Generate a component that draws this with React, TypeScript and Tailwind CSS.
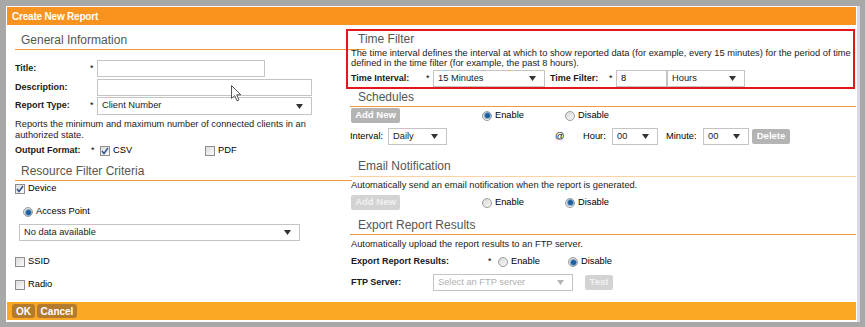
import React from 'react';

const font = { fontFamily: '"Liberation Sans", Arial, sans-serif' };

function Arrow({ muted = false }: { muted?: boolean }) {
  return (
    <svg width="7" height="5" viewBox="0 0 7 5" className="shrink-0">
      <path d="M0 0 L7 0 L3.5 5 Z" fill={muted ? '#b5b5b5' : '#333'} />
    </svg>
  );
}

function Select({ value, w, muted = false }: { value: string; w: string; muted?: boolean }) {
  return (
    <div
      className={`${w} h-full flex items-center justify-between border border-[#c4c4c4] bg-white pl-[4px] pr-[8px] text-[9.3px] ${
        muted ? 'text-[#b0b0b0]' : 'text-[#222]'
      }`}
    >
      <span>{value}</span>
      <Arrow muted={muted} />
    </div>
  );
}

function Checkbox({ checked = false }: { checked?: boolean }) {
  return (
    <div className="w-[10px] h-[10px] shrink-0 border border-[#8e8e8e] bg-gradient-to-br from-[#dcdcdc] to-[#fafafa] flex items-center justify-center">
      {checked && (
        <svg width="8" height="8" viewBox="0 0 8 8">
          <path d="M1 4 L3 6.5 L7 1" fill="none" stroke="#2c4f8a" strokeWidth="1.4" />
        </svg>
      )}
    </div>
  );
}

function Radio({ checked = false }: { checked?: boolean }) {
  return (
    <div className="w-[10px] h-[10px] shrink-0 rounded-full border border-[#9c9c9c] bg-gradient-to-br from-[#d8d8d8] to-[#f8f8f8] flex items-center justify-center">
      {checked && <div className="w-[5px] h-[5px] rounded-full bg-[#1f5f9e] ring-1 ring-[#7fa6cc]" />}
    </div>
  );
}

function Btn({ label, w, disabled = false }: { label: string; w: string; disabled?: boolean }) {
  return (
    <div
      className={`${w} h-full rounded-[2px] flex items-center justify-center font-bold text-[9.5px] ${
        disabled ? 'bg-[#d3d3d3] text-[#f1f1f1]' : 'bg-[#b4b4b4] text-white'
      }`}
    >
      {label}
    </div>
  );
}

function Label({ text, w }: { text: string; w: string }) {
  return <div className={`${w} shrink-0 font-bold text-[9px] text-[#1a1a1a]`}>{text}</div>;
}

function Cursor() {
  return (
    <svg width="12" height="17" viewBox="0 0 12 17" className="absolute left-[231px] top-[85px]">
      <path
        d="M0.5 0.5 L0.5 13.5 L3.6 10.6 L6 15.8 L8 14.9 L5.7 9.8 L9.8 9.8 Z"
        fill="#fff"
        stroke="#555"
        strokeWidth="1"
        strokeLinejoin="round"
      />
    </svg>
  );
}

export default function App() {
  return (
    <div className="relative w-[865px] h-[327px] bg-[#a8a8a8] pt-[6px] pl-[6px]" style={font}>
      <div className="w-[854px] h-[316px] bg-white border-r-[3px] border-[#d8d8e6] pt-px pl-px pr-px pb-[2px] flex flex-col">
        {/* header */}
        <div className="h-[18px] shrink-0 bg-[#f7931e] flex items-center pl-[5px]">
          <span className="text-white font-bold text-[10px] tracking-[-0.2px]">Create New Report</span>
        </div>

        <div className="flex-1 flex">
          {/* left column */}
          <div className="w-[339px] shrink-0 flex flex-col pl-[8px]">
            <div className="h-[25px] flex items-end pb-[3px] border-b border-[#f39a3c] mr-[-19px] relative">
              <span className="pl-[6px] text-[12px] leading-[12px] text-[#555]">General Information</span>
            </div>

            <div className="mt-[10px] h-[17px] flex items-center">
              <Label text="Title:" w="w-[75px]" />
              <span className="w-[7px] text-[9px]">*</span>
              <div className="w-[168px] h-full border border-[#c4c4c4]" />
            </div>
            <div className="mt-[2px] h-[17px] flex items-center">
              <Label text="Description:" w="w-[82px]" />
              <div className="w-[215px] h-full border border-[#c4c4c4]" />
            </div>
            <div className="mt-[1px] h-[18px] flex items-center">
              <Label text="Report Type:" w="w-[75px]" />
              <span className="w-[7px] text-[9px]">*</span>
              <Select value="Client Number" w="w-[215px]" />
            </div>

            <p className="mt-[4px] text-[9.3px] leading-[11px] text-[#222] w-[310px]">
              Reports the minimum and maximum number of connected clients in an authorized state.
            </p>

            <div className="mt-[3px] h-[14px] flex items-center">
              <Label text="Output Format:" w="w-[76px]" />
              <span className="w-[9px] text-[9px]">*</span>
              <Checkbox checked />
              <span className="ml-[3px] w-[92px] text-[9.3px]">CSV</span>
              <Checkbox />
              <span className="ml-[3px] text-[9.3px]">PDF</span>
            </div>

            <div className="h-[23px] flex items-end pb-[3px] border-b border-[#f39a3c] mr-[-6px]">
              <span className="pl-[6px] text-[12px] leading-[12px] text-[#555]">Resource Filter Criteria</span>
            </div>

            <div className="mt-[2px] h-[12px] flex items-center">
              <Checkbox checked />
              <span className="ml-[3px] text-[9.3px]">Device</span>
            </div>
            <div className="mt-[11px] h-[12px] flex items-center pl-[8px]">
              <Radio checked />
              <span className="ml-[3px] text-[9.3px]">Access Point</span>
            </div>
            <div className="mt-[6px] h-[17px] pl-[4px]">
              <Select value="No data available" w="w-[281px]" />
            </div>
            <div className="mt-[15px] h-[12px] flex items-center">
              <Checkbox />
              <span className="ml-[3px] text-[9.3px]">SSID</span>
            </div>
            <div className="mt-[11px] h-[12px] flex items-center">
              <Checkbox />
              <span className="ml-[3px] text-[9.3px]">Radio</span>
            </div>
          </div>

          {/* right column */}
          <div className="flex-1 flex flex-col relative">
            <div className="mt-[4px] h-[60px] border-2 border-[#e4161b] mr-[1px] flex flex-col pl-[3px]">
              <div className="h-[14px] pl-[7px] text-[12px] leading-[14px] text-[#555] mt-px">Time Filter</div>
              <p className="mt-[2px] text-[9.3px] leading-[10px] text-[#222]">
                The time interval defines the interval at which to show reported data (for example, every 15 minutes) for the period of time
                <br />
                defined in the time filter (for example, the past 8 hours).
              </p>
              <div className="mt-[2px] h-[17px] flex items-center">
                <Label text="Time Interval:" w="w-[75px]" />
                <span className="w-[7px] text-[9px]">*</span>
                <Select value="15 Minutes" w="w-[112px]" />
                <Label text="Time Filter:" w="ml-[5px] w-[59px]" />
                <span className="w-[7px] text-[9px]">*</span>
                <div className="w-[51px] h-full border border-[#c4c4c4] flex items-center pl-[4px] text-[9.3px]">8</div>
                <Select value="Hours" w="w-[78px]" />
              </div>
            </div>

            <div className="h-[18px] ml-[4px] flex items-end pb-[2px] border-b border-[#f39a3c]">
              <span className="pl-[8px] text-[12px] leading-[14px] text-[#555]">Schedules</span>
            </div>
            <div className="mt-[1px] h-[15px] flex items-center pl-[5px]">
              <Btn label="Add New" w="w-[49px]" />
              <div className="ml-[82px] w-[83px] flex items-center">
                <Radio checked />
                <span className="ml-[3px] text-[9.3px]">Enable</span>
              </div>
              <Radio />
              <span className="ml-[3px] text-[9.3px]">Disable</span>
            </div>
            <div className="mt-[5px] h-[17px] flex items-center pl-[4px] text-[9.3px]">
              <span className="w-[38px]">Interval:</span>
              <Select value="Daily" w="w-[59px]" />
              <span className="ml-[108px] w-[28px]">@</span>
              <span className="w-[29px]">Hour:</span>
              <Select value="00" w="w-[46px]" />
              <span className="ml-[8px] w-[37px]">Minute:</span>
              <Select value="00" w="w-[46px]" />
              <div className="ml-[3px] h-[15px]">
                <Btn label="Delete" w="w-[38px]" />
              </div>
            </div>

            <div className="h-[32px] ml-[4px] flex items-end pb-[3px] border-b border-[#fcd2a2]">
              <span className="pl-[8px] text-[12px] leading-[14px] text-[#555]">Email Notification</span>
            </div>
            <div className="mt-[2px] h-[12px] pl-[5px] text-[9.3px] leading-[12px] text-[#222]">
              Automatically send an email notification when the report is generated.
            </div>
            <div className="mt-[4px] h-[15px] flex items-center pl-[5px]">
              <Btn label="Add New" w="w-[49px]" disabled />
              <div className="ml-[82px] w-[83px] flex items-center">
                <Radio />
                <span className="ml-[3px] text-[9.3px]">Enable</span>
              </div>
              <Radio checked />
              <span className="ml-[3px] text-[9.3px]">Disable</span>
            </div>

            <div className="h-[25px] ml-[4px] flex items-end pb-[2px] border-b border-[#f39a3c]">
              <span className="pl-[8px] text-[12px] leading-[14px] text-[#555]">Export Report Results</span>
            </div>
            <div className="mt-[3px] h-[12px] pl-[5px] text-[9.3px] leading-[12px] text-[#222]">
              Automatically upload the report results to an FTP server.
            </div>
            <div className="mt-[6px] h-[12px] flex items-center pl-[5px]">
              <Label text="Export Report Results:" w="w-[137px]" />
              <span className="w-[10px] text-[9px]">*</span>
              <div className="w-[70px] flex items-center">
                <Radio />
                <span className="ml-[3px] text-[9.3px]">Enable</span>
              </div>
              <Radio checked />
              <span className="ml-[3px] text-[9.3px]">Disable</span>
            </div>
            <div className="mt-[6px] h-[17px] flex items-center pl-[5px]">
              <Label text="FTP Server:" w="w-[82px]" />
              <Select value="Select an FTP server" w="w-[140px]" muted />
              <div className="ml-[12px] h-[15px]">
                <Btn label="Test" w="w-[28px]" disabled />
              </div>
            </div>
          </div>
        </div>

        {/* footer */}
        <div className="h-[18px] shrink-0 bg-[#fba825] flex items-center gap-[2px] pl-[5px]">
          <div className="h-[14px] w-[23px] rounded-[3px] bg-[#b47a2d] text-white font-bold text-[10px] flex items-center justify-center">OK</div>
          <div className="h-[14px] w-[40px] rounded-[3px] bg-[#b47a2d] text-white font-bold text-[10px] flex items-center justify-center">Cancel</div>
        </div>
      </div>
      <Cursor />
    </div>
  );
}
